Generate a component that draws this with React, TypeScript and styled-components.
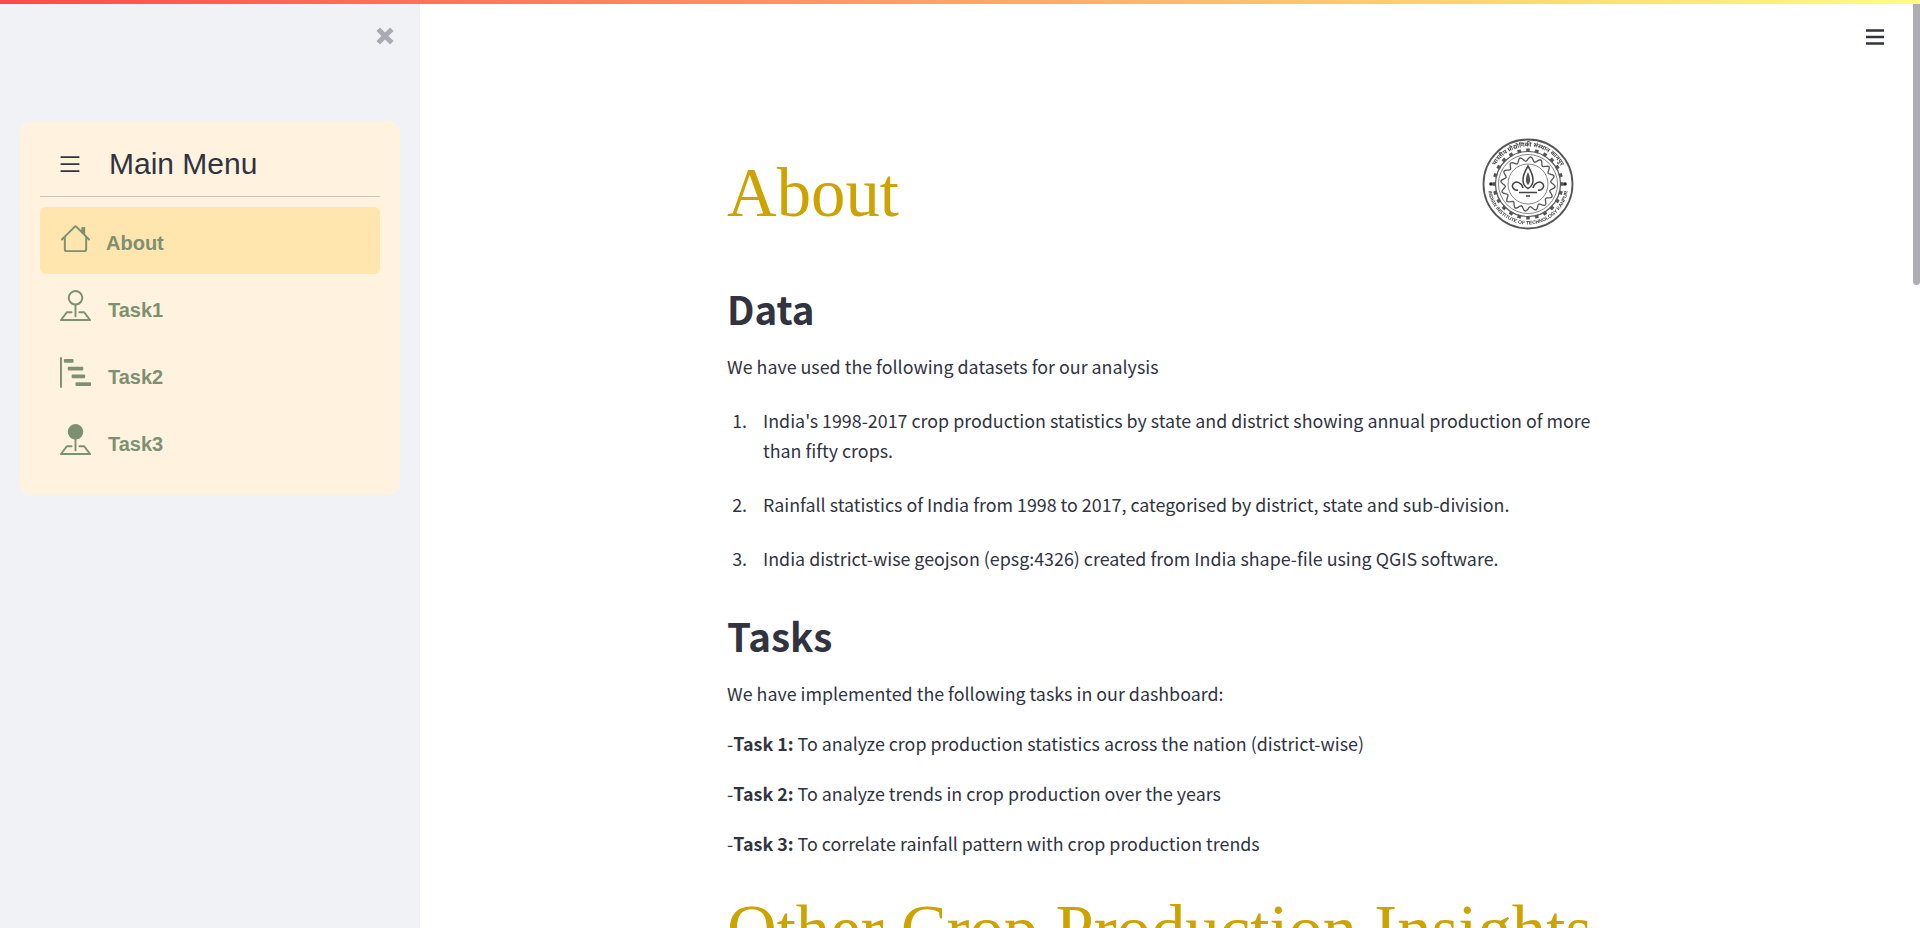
import React from "react";
import styled, { createGlobalStyle } from "styled-components";
import { BsHouse, BsPinMap, BsPinMapFill, BsBarChartSteps, BsList } from "react-icons/bs";

const Global = createGlobalStyle`
  html, body { margin: 0; padding: 0; height: 100%; overflow: hidden; background: #fff; }
  #root { height: 100%; }
`;

const Page = styled.div`
  position: relative;
  display: flex;
  height: 928px;
  font-family: "Noto Sans CJK SC", "Noto Sans", sans-serif;
  color: #31333f;
`;

const TopStripe = styled.div`
  position: absolute;
  top: 0;
  left: 0;
  right: 0;
  height: 4px;
  z-index: 5;
  background: linear-gradient(90deg, #ff4b4b, #fffd80);
`;

const Sidebar = styled.aside`
  width: 420px;
  flex: none;
  background: #f0f2f6;
  display: flex;
  flex-direction: column;
  padding: 27px 20px 0;
  box-sizing: border-box;
`;

const CloseRow = styled.div`
  display: flex;
  justify-content: flex-end;
  height: 94px;
  padding-right: 6px;
`;

const CloseIcon = styled.svg`
  width: 18px;
  height: 18px;
  color: #a9aab2;
`;

const MenuCard = styled.nav`
  background: #fff3e0;
  border-radius: 12px;
  padding: 0 20px;
  height: 374px;
  box-sizing: border-box;
`;

const MenuHeader = styled.div`
  display: flex;
  align-items: center;
  height: 76px;
  padding-top: 10px;
  box-sizing: border-box;
  border-bottom: 1px solid #cbc5bc;
  font-family: "Liberation Sans", Arial, sans-serif;
  font-size: 30px;
  color: #31333f;
  padding-left: 16px;
  gap: 25px;
  svg { width: 28px; height: 28px; flex: none; }
`;

const MenuList = styled.div`
  display: flex;
  flex-direction: column;
  margin-top: 10px;
`;

const MenuItem = styled.a<{ $active?: boolean; $gap: number }>`
  display: flex;
  align-items: center;
  height: 67px;
  padding: 5px 0 0 20px;
  box-sizing: border-box;
  gap: ${(p) => p.$gap}px;
  border-radius: 6px;
  background: ${(p) => (p.$active ? "#ffe5ae" : "transparent")};
  color: #7d9070;
  font-family: "Liberation Sans", Arial, sans-serif;
  font-size: 20px;
  font-weight: 700;
  svg { width: 31px; height: 31px; flex: none; margin-bottom: 9px; }
`;

const Main = styled.main`
  flex: 1;
  height: 100%;
  overflow: hidden;
  display: flex;
  justify-content: center;
`;

const ScrollThumb = styled.div`
  position: absolute;
  top: 4px;
  right: 0;
  width: 7px;
  height: 281px;
  background: #adadb3;
  border-radius: 0 0 4px 4px;
`;

const MenuButton = styled.svg`
  position: absolute;
  top: 29px;
  right: 36px;
  width: 18px;
  height: 16px;
  color: #31333f;
`;

const Content = styled.div`
  width: 886px;
  flex: none;
  box-sizing: border-box;
  padding-top: 138px;
  font-size: 17.85px;
  line-height: 30px;
`;

const TitleRow = styled.div`
  display: flex;
  justify-content: space-between;
  align-items: flex-start;
  height: 138px;
  padding-right: 39px;
`;

const Title = styled.h1`
  font-family: "Liberation Serif", "Times New Roman", serif;
  font-weight: 400;
  font-size: 68.75px;
  line-height: 80px;
  color: #cca300;
  margin: 15px 0 0;
`;

const Seal = styled.svg`
  width: 92px;
  height: 92px;
  filter: blur(0.6px);
`;

const Heading = styled.h2`
  font-size: 38.5px;
  line-height: 64px;
  font-weight: 600;
  margin: 0 0 11px;
  color: #31333f;
`;

const Text = styled.p`
  margin: 0 0 20px;
`;

const Strong = styled.strong`
  font-weight: 600;
`;

const List = styled.ol`
  margin: 24px 0 30px;
  padding: 0 0 0 24px;
`;

const Item = styled.li`
  margin-bottom: 24px;
  padding-left: 12px;
`;

const SectionTitle = styled(Title)`
  margin: 32px 0 0;
  white-space: nowrap;
`;

function scallopRing(count: number, r: number, amp: number) {
  const pts: string[] = [];
  for (let i = 0; i <= count * 8; i++) {
    const a = (i / (count * 8)) * Math.PI * 2;
    const rad = r + amp * Math.sin(a * count);
    pts.push(`${(46 + rad * Math.cos(a)).toFixed(2)} ${(46 + rad * Math.sin(a)).toFixed(2)}`);
  }
  return `M${pts.join("L")}Z`;
}

function IitLogo() {
  const teeth = Array.from({ length: 24 }, (_, i) => i * 15);
  return (
    <Seal viewBox="0 0 92 92" aria-label="IIT Kanpur seal">
      <defs>
        <path id="sealBottom" d="M5.500 46a40.500 40.500 0 0 0 81 0" />
        <path id="sealTop" d="M8.500 46a37.500 37.500 0 0 1 75 0" />
      </defs>
      <circle cx="46" cy="46" r="44.500" fill="none" stroke="#555" strokeWidth="1.800" />
      <circle cx="46" cy="46" r="32.500" fill="none" stroke="#555" strokeWidth="1.200" />
      {teeth.map((a) => (
        <rect key={a} x="44.200" y="10.500" width="3.600" height="3.500" fill="#555" transform={`rotate(${a} 46 46)`} />
      ))}
      <circle cx="46" cy="46" r="29.500" fill="none" stroke="#666" strokeWidth="0.800" />
      <path d={scallopRing(16, 25, 2.2)} fill="none" stroke="#555" strokeWidth="1.300" />
      <circle cx="46" cy="46" r="20" fill="none" stroke="#666" strokeWidth="0.800" />
      <path d="M46 28c-3.500 6-5.500 10-5 15 .3 3.500 2.200 6 5 7.500 2.800-1.500 4.700-4 5-7.500 .5-5-1.500-9-5-15z" fill="none" stroke="#444" strokeWidth="1.500" />
      <path d="M46 34c-1.500 3-2.200 6-2 9 .1 1.500 1 3 2 4 1-1 1.900-2.500 2-4 .2-3-.5-6-2-9z" fill="#555" />
      <path d="M41 50c-1-5-7-8-10-4-1.800 3 1.200 7 5 6M51 50c1-5 7-8 10-4 1.800 3-1.200 7-5 6" fill="none" stroke="#444" strokeWidth="1.500" />
      <path d="M37 54.500h18M44 58h4" stroke="#444" strokeWidth="1.500" />
      <circle cx="9" cy="46" r="1.800" fill="#222" />
      <circle cx="83" cy="46" r="1.800" fill="#222" />
      <text fontSize="5" fontWeight="700" fill="#444" fontFamily="'Liberation Sans', sans-serif">
        <textPath href="#sealBottom" startOffset="50%" textAnchor="middle">INDIAN INSTITUTE OF TECHNOLOGY KANPUR</textPath>
      </text>
      <text fontSize="6" fontWeight="700" fill="#444" fontFamily="'Noto Sans', 'DejaVu Sans', sans-serif">
        <textPath href="#sealTop" startOffset="50%" textAnchor="middle">भारतीय प्रौद्योगिकी संस्थान कानपुर</textPath>
      </text>
    </Seal>
  );
}

export default function App() {
  return (
    <Page>
      <Global />
      <TopStripe />
      <Sidebar>
        <CloseRow>
          <CloseIcon viewBox="0 0 18 18">
            <path d="M2.200 2.200l13.600 13.600M15.800 2.200L2.200 15.800" stroke="currentColor" strokeWidth="5" fill="none" />
          </CloseIcon>
        </CloseRow>
        <MenuCard>
          <MenuHeader>
            <BsList />
            <span>Main Menu</span>
          </MenuHeader>
          <MenuList>
            <MenuItem $active $gap={15}><BsHouse /><span>About</span></MenuItem>
            <MenuItem $gap={17}><BsPinMap /><span>Task1</span></MenuItem>
            <MenuItem $gap={17}><BsBarChartSteps /><span>Task2</span></MenuItem>
            <MenuItem $gap={17}><BsPinMapFill /><span>Task3</span></MenuItem>
          </MenuList>
        </MenuCard>
      </Sidebar>
      <Main>
        <Content>
          <TitleRow>
            <Title>About</Title>
            <IitLogo />
          </TitleRow>
          <Heading>Data</Heading>
          <Text>We have used the following datasets for our analysis</Text>
          <List>
            <Item>India's 1998-2017 crop production statistics by state and district showing annual production of more than fifty crops.</Item>
            <Item>Rainfall statistics of India from 1998 to 2017, categorised by district, state and sub-division.</Item>
            <Item>India district-wise geojson (epsg:4326) created from India shape-file using QGIS software.</Item>
          </List>
          <Heading>Tasks</Heading>
          <Text>We have implemented the following tasks in our dashboard:</Text>
          <Text>-<Strong>Task 1:</Strong> To analyze crop production statistics across the nation (district-wise)</Text>
          <Text>-<Strong>Task 2:</Strong> To analyze trends in crop production over the years</Text>
          <Text>-<Strong>Task 3:</Strong> To correlate rainfall pattern with crop production trends</Text>
          <SectionTitle>Other Crop Production Insights</SectionTitle>
        </Content>
      </Main>
      <ScrollThumb />
      <MenuButton viewBox="0 0 18 16">
        <path d="M0 1.500h18M0 8h18M0 14.500h18" stroke="currentColor" strokeWidth="2.500" />
      </MenuButton>
    </Page>
  );
}
